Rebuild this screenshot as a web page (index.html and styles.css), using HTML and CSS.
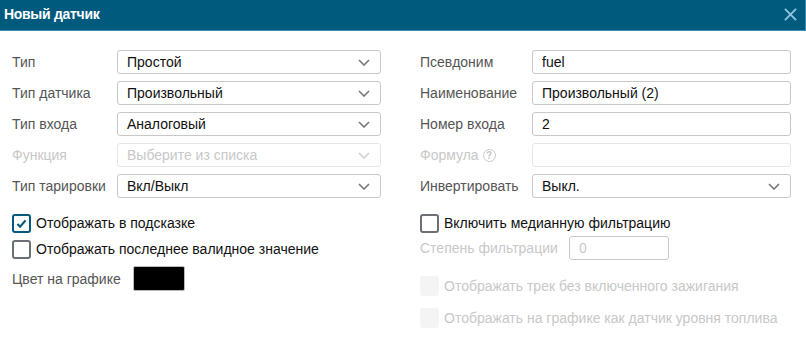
FILE: index.html
```html
<!DOCTYPE html>
<html lang="ru">
<head>
    <meta charset="UTF-8">
    <title>Новый датчик</title>
    <link rel="stylesheet" href="styles.css">
</head>
<body>
    <div class="dialog">
        <!-- Header -->
        <header class="dialog-header">
            <h1>Новый датчик</h1>
            <svg class="close" viewBox="0 0 14 14"><path d="M1 1l12 12M13 1L1 13"/></svg>
        </header>

        <div class="dialog-body">
            <!-- Left column -->
            <div class="column">
                <div class="row">
                    <label>Тип</label>
                    <div class="select">Простой<svg viewBox="0 0 12 7"><path d="M1 1l5 5 5-5"/></svg></div>
                </div>
                <div class="row">
                    <label>Тип датчика</label>
                    <div class="select">Произвольный<svg viewBox="0 0 12 7"><path d="M1 1l5 5 5-5"/></svg></div>
                </div>
                <div class="row">
                    <label>Тип входа</label>
                    <div class="select">Аналоговый<svg viewBox="0 0 12 7"><path d="M1 1l5 5 5-5"/></svg></div>
                </div>
                <div class="row disabled">
                    <label>Функция</label>
                    <div class="select">Выберите из списка<svg viewBox="0 0 12 7"><path d="M1 1l5 5 5-5"/></svg></div>
                </div>
                <div class="row">
                    <label>Тип тарировки</label>
                    <div class="select">Вкл/Выкл<svg viewBox="0 0 12 7"><path d="M1 1l5 5 5-5"/></svg></div>
                </div>

                <div class="checks">
                    <div class="check">
                        <span class="box checked"><svg viewBox="0 0 12 10"><path d="M1.5 5.5l3 3 6-7"/></svg></span>
                        Отображать в подсказке
                    </div>
                    <div class="check">
                        <span class="box"></span>
                        Отображать последнее валидное значение
                    </div>
                </div>

                <div class="color-row">
                    <label>Цвет на графике</label>
                    <span class="swatch"></span>
                </div>
            </div>

            <!-- Right column -->
            <div class="column right">
                <div class="row">
                    <label>Псевдоним</label>
                    <div class="input">fuel</div>
                </div>
                <div class="row">
                    <label>Наименование</label>
                    <div class="input">Произвольный (2)</div>
                </div>
                <div class="row">
                    <label>Номер входа</label>
                    <div class="input">2</div>
                </div>
                <div class="row disabled">
                    <label>Формула <span class="help">?</span></label>
                    <div class="input"></div>
                </div>
                <div class="row">
                    <label>Инвертировать</label>
                    <div class="select">Выкл.<svg viewBox="0 0 12 7"><path d="M1 1l5 5 5-5"/></svg></div>
                </div>

                <div class="checks">
                    <div class="check">
                        <span class="box"></span>
                        Включить медианную фильтрацию
                    </div>
                    <div class="filter-row">
                        <label>Степень фильтрации</label>
                        <div class="input small">0</div>
                    </div>
                    <div class="check off">
                        <span class="box"></span>
                        Отображать трек без включенного зажигания
                    </div>
                    <div class="check off">
                        <span class="box"></span>
                        Отображать на графике как датчик уровня топлива
                    </div>
                </div>
            </div>
        </div>
    </div>
</body>
</html>
```

FILE: styles.css
```css
* {
    margin: 0;
    padding: 0;
    box-sizing: border-box;
}

body {
    font-family: "Liberation Sans", Arial, sans-serif;
    font-size: 14px;
    color: #111;
    background: #fff;
    width: 806px;
    height: 354px;
    overflow: hidden;
}

.dialog-header {
    height: 31px;
    background-color: #005a7d;
    border-bottom: 1px solid #3a8fb5;
    border-right: 1px solid #3a8fb5;
    display: flex;
    align-items: center;
    justify-content: space-between;
    padding: 0 8px 2px 4px;
}

.dialog-header h1 {
    color: #fff;
    font-size: 14px;
    font-weight: 700;
    letter-spacing: -0.3px;
}

.close {
    width: 13px;
    height: 13px;
    fill: none;
    stroke: #8ec7dc;
    stroke-width: 2;
}

.dialog-body {
    display: grid;
    grid-template-columns: 369px 371px;
    column-gap: 39px;
    padding: 19px 15px 0 12px;
}

.row {
    display: flex;
    align-items: center;
    height: 24px;
    margin-bottom: 7px;
}

.row label {
    width: 105px;
    flex: none;
    color: #555;
    display: flex;
    align-items: center;
    gap: 4px;
}

.right .row label {
    width: 112px;
}

.select,
.input {
    flex: 1;
    height: 24px;
    border: 1px solid #c8c8c8;
    border-radius: 3px;
    display: flex;
    align-items: center;
    justify-content: space-between;
    padding: 0 10px 0 9px;
    color: #111;
}

.select svg {
    width: 12px;
    height: 7px;
    fill: none;
    stroke: #777;
    stroke-width: 1.6;
}

.row.disabled label,
.row.disabled .select {
    color: #c8c8c8;
}

.row.disabled .select,
.row.disabled .input {
    border-color: #e6e6e6;
}

.row.disabled .select svg {
    stroke: #cfcfcf;
}

.help {
    display: inline-flex;
    align-items: center;
    justify-content: center;
    width: 13px;
    height: 13px;
    border: 1.5px solid #c8c8c8;
    border-radius: 50%;
    font-size: 10px;
    font-weight: 700;
}

.checks {
    margin-top: 16px;
    display: flex;
    flex-direction: column;
}

.check {
    display: flex;
    align-items: center;
    gap: 5px;
    height: 18px;
    margin-bottom: 8px;
}

.box {
    width: 19px;
    height: 19px;
    border: 2px solid #6b6f76;
    border-radius: 3px;
    display: flex;
    align-items: center;
    justify-content: center;
    flex: none;
}

.box.checked {
    border-color: #005a7d;
}

.box svg {
    width: 11px;
    height: 9px;
    fill: none;
    stroke: #005a7d;
    stroke-width: 2.4;
}

.check.off {
    color: #c8c8c8;
    height: 20px;
    margin-bottom: 12px;
}

.check.off .box {
    border: none;
    background: #f4f4f4;
    width: 19px;
    height: 20px;
}

.filter-row {
    display: flex;
    align-items: center;
    height: 24px;
    margin: -4px 0 16px;
}

.filter-row label {
    color: #c8c8c8;
    width: 149px;
}

.input.small {
    flex: none;
    width: 100px;
    color: #c8c8c8;
}

.color-row {
    display: flex;
    align-items: center;
}

.color-row label {
    color: #555;
    width: 121px;
}

.swatch {
    width: 52px;
    height: 25px;
    background: #000;
    border: 1px solid #bbb;
    border-radius: 2px;
}
```
